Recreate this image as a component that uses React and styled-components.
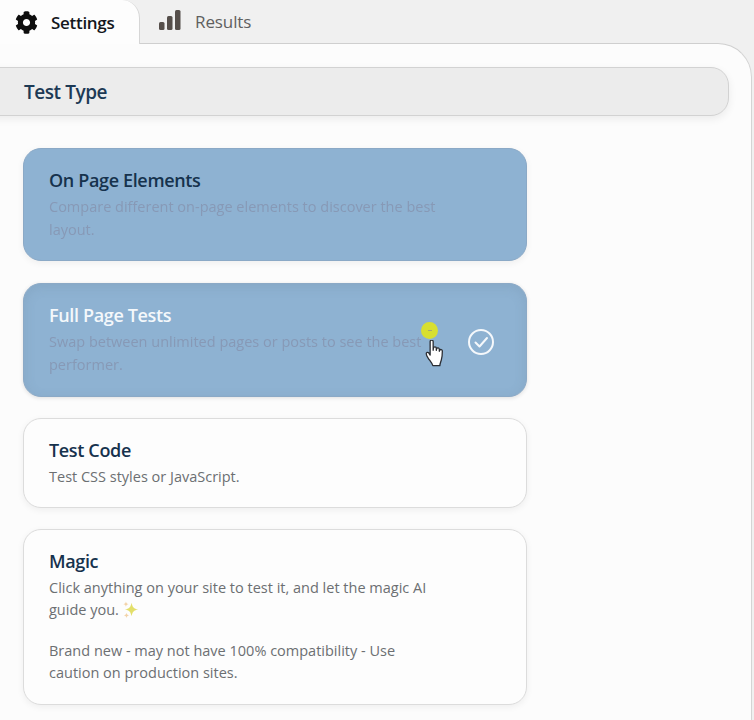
import React from 'react';
import styled, { createGlobalStyle } from 'styled-components';
import { FaCog } from 'react-icons/fa';

const GlobalStyle = createGlobalStyle`
  html, body {
    margin: 0;
    height: 100%;
    overflow: hidden;
    background: #f0f0f0;
    font-family: "Open Sans", "Noto Sans", sans-serif;
  }
`;

const Page = styled.div`
  display: flex;
  flex-direction: column;
  height: 720px;
  padding-right: 2px;
  box-sizing: border-box;
`;

const TabBar = styled.div`
  display: flex;
  align-items: stretch;
  height: 43px;
  position: relative;
  z-index: 1;
`;

const Tab = styled.div`
  display: flex;
  align-items: center;
  gap: 13px;
  box-sizing: border-box;
  width: ${(p) => (p.$active ? '140px' : 'auto')};
  height: ${(p) => (p.$active ? '44px' : '43px')};
  padding-left: ${(p) => (p.$active ? '15px' : '18px')};
  background: ${(p) => (p.$active ? '#fdfdfd' : 'transparent')};
  border-top-right-radius: 18px;
  border-right: ${(p) => (p.$active ? '1px solid #d6d6d6' : 'none')};
  color: ${(p) => (p.$active ? '#14171c' : '#5f5f5f')};
  font-size: 17px;
  font-weight: ${(p) => (p.$active ? 600 : 500)};
  letter-spacing: ${(p) => (p.$active ? '-0.3px' : '-0.1px')};
`;

const Panel = styled.div`
  flex: 1;
  overflow: hidden;
  background: #fcfcfc;
  border-top: 1px solid #cfcfcf;
  border-right: 1px solid #d4d4d4;
  border-top-right-radius: 34px;
`;

const SectionHeader = styled.div`
  display: flex;
  align-items: center;
  box-sizing: border-box;
  height: 49px;
  width: 749px;
  margin: 23px 0 32px -20px;
  padding-left: 43px;
  background: #ececec;
  border: 1px solid #d2d2d2;
  border-radius: 18px;
  box-shadow: 0 3px 8px rgba(0, 0, 0, 0.07);
  color: #1d3a55;
  font-size: 19px;
  font-weight: 600;
  letter-spacing: -0.45px;
`;

const CardList = styled.div`
  display: flex;
  flex-direction: column;
  gap: 21px;
  width: 504px;
  margin-left: 23px;
`;

const Card = styled.div`
  position: relative;
  display: flex;
  align-items: center;
  justify-content: space-between;
  box-sizing: border-box;
  min-height: ${(p) => (p.$selected ? '114px' : '0')};
  margin-top: ${(p) => (p.$selected ? '1px' : '0')};
  padding: ${(p) => (p.$tinted ? '19px' : '18.5px')} 31px 19px 25px;
  border-radius: 18px;
  border: 1px solid ${(p) => (p.$tinted ? '#8ba9c6' : '#dcdcdc')};
  background: ${(p) => (p.$tinted ? '#8eb2d2' : '#fdfdfd')};
  box-shadow: ${(p) => (p.$selected
    ? 'inset 0 3px 12px rgba(90, 110, 130, 0.16), 0 1px 4px rgba(0, 0, 0, 0.12)'
    : '0 2px 7px rgba(0, 0, 0, 0.06)')};
`;

const CardBody = styled.div`
  align-self: flex-start;
  width: 392px;
`;

const CardTitle = styled.div`
  margin-bottom: 4px;
  color: ${(p) => (p.$light ? '#f4f8fb' : '#16324d')};
  font-size: 18px;
  font-weight: 600;
  line-height: 24px;
  letter-spacing: -0.35px;
`;

const CardText = styled.p`
  margin: 0;
  color: ${(p) => (p.$ghost ? '#8799b6' : '#6c6f72')};
  font-size: 14.5px;
  line-height: 22.5px;
  filter: ${(p) => (p.$ghost ? 'blur(0.7px)' : 'none')};

  & + & {
    margin-top: 18px;
  }
`;

const CheckMark = styled.svg`
  width: 28px;
  height: 28px;
  margin-top: 3px;
  flex: none;
`;

const ClickDot = styled.span`
  position: absolute;
  left: 397px;
  top: 38px;
  display: flex;
  align-items: center;
  justify-content: center;
  width: 17px;
  height: 17px;
  border-radius: 50%;
  background: #d8df30;

  &::after {
    content: '';
    width: 4px;
    height: 1px;
    background: #a8a86a;
  }
`;

const HandCursor = styled.svg`
  position: absolute;
  left: 400px;
  top: 56px;
  width: 22px;
  height: 27px;
`;

const Sparkle = styled.svg`
  width: 18px;
  height: 18px;
  vertical-align: -4px;
  margin-left: 3px;
`;

const Bars = styled.svg`
  width: 24px;
  height: 20px;
  margin-top: -3px;
  fill: #554e4a;
`;

const BarsIcon = () => (
  <Bars viewBox="0 0 24 20">
    <rect x="1" y="12" width="5.5" height="8" rx="1.5" />
    <rect x="9" y="6" width="5.5" height="14" rx="1.5" />
    <rect x="17" y="0" width="5.5" height="20" rx="1.5" />
  </Bars>
);

function App() {
  return (
    <>
      <GlobalStyle />
      <Page>
        <TabBar>
          <Tab $active>
            <FaCog size={23} color="#0d0d0d" />
            Settings
          </Tab>
          <Tab>
            <BarsIcon />
            Results
          </Tab>
        </TabBar>
        <Panel>
          <SectionHeader>Test Type</SectionHeader>
          <CardList>
            <Card $tinted>
              <CardBody>
                <CardTitle>On Page Elements</CardTitle>
                <CardText $ghost>Compare different on-page elements to discover the best layout.</CardText>
              </CardBody>
            </Card>
            <Card $tinted $selected>
              <CardBody>
                <CardTitle $light>Full Page Tests</CardTitle>
                <CardText $ghost>Swap between unlimited pages or posts to see the best performer.</CardText>
              </CardBody>
              <CheckMark viewBox="0 0 28 28" fill="none" stroke="#f5f8fb" strokeWidth="2" strokeLinecap="round" strokeLinejoin="round">
                <circle cx="14" cy="14" r="12" />
                <path d="M8.5 14.5l4 4 7.5-8.5" />
              </CheckMark>
              <ClickDot />
              <HandCursor viewBox="1 1 17 25">
                <path
                  d="M5 2.500c0-1.800 2.800-1.800 2.800 0v8l.3-2.200c.3-1.500 2.600-1.300 2.600.3v2l.3-1.400c.4-1.400 2.500-1.100 2.500.4v1.800l.4-.9c.5-1.200 2.400-.8 2.400.7 0 3-.1 6-1 8.500-.5 1.600-1.200 3-1.300 5H7.500c-.7-2.600-2.200-4-4.200-6.800-.9-1.300-1.900-3-1.900-4.200 0-1.200 1.400-1.600 2.300-.8L5 15z"
                  fill="#fff"
                  stroke="#2a2d33"
                  strokeWidth="1.200"
                  strokeLinejoin="round"
                />
              </HandCursor>
            </Card>
            <Card>
              <CardBody>
                <CardTitle>Test Code</CardTitle>
                <CardText>Test CSS styles or JavaScript.</CardText>
              </CardBody>
            </Card>
            <Card>
              <CardBody>
                <CardTitle>Magic</CardTitle>
                <CardText>
                  Click anything on your site to test it, and let the magic AI guide you.
                  <Sparkle viewBox="0 0 16 16">
                    <path d="M8.500 1.500c.8 4 2 5.200 6 6-4 .8-5.200 2-6 6-.8-4-2-5.200-6-6 4-.8 5.200-2 6-6z" fill="#e3df6a" />
                    <path d="M3.500 .5c.3 1.500.8 2 2.300 2.300-1.500.3-2 .8-2.300 2.300-.3-1.500-.8-2-2.300-2.300 1.500-.3 2-.8 2.300-2.300zM4 10.500c.3 1.500.8 2 2.300 2.300-1.500.3-2 .8-2.300 2.300-.3-1.500-.8-2-2.300-2.300 1.500-.3 2-.8 2.300-2.300z" fill="#f3d3a8" />
                  </Sparkle>
                </CardText>
                <CardText>Brand new - may not have 100% compatibility - Use caution on production sites.</CardText>
              </CardBody>
            </Card>
          </CardList>
        </Panel>
      </Page>
    </>
  );
}

export default App;
